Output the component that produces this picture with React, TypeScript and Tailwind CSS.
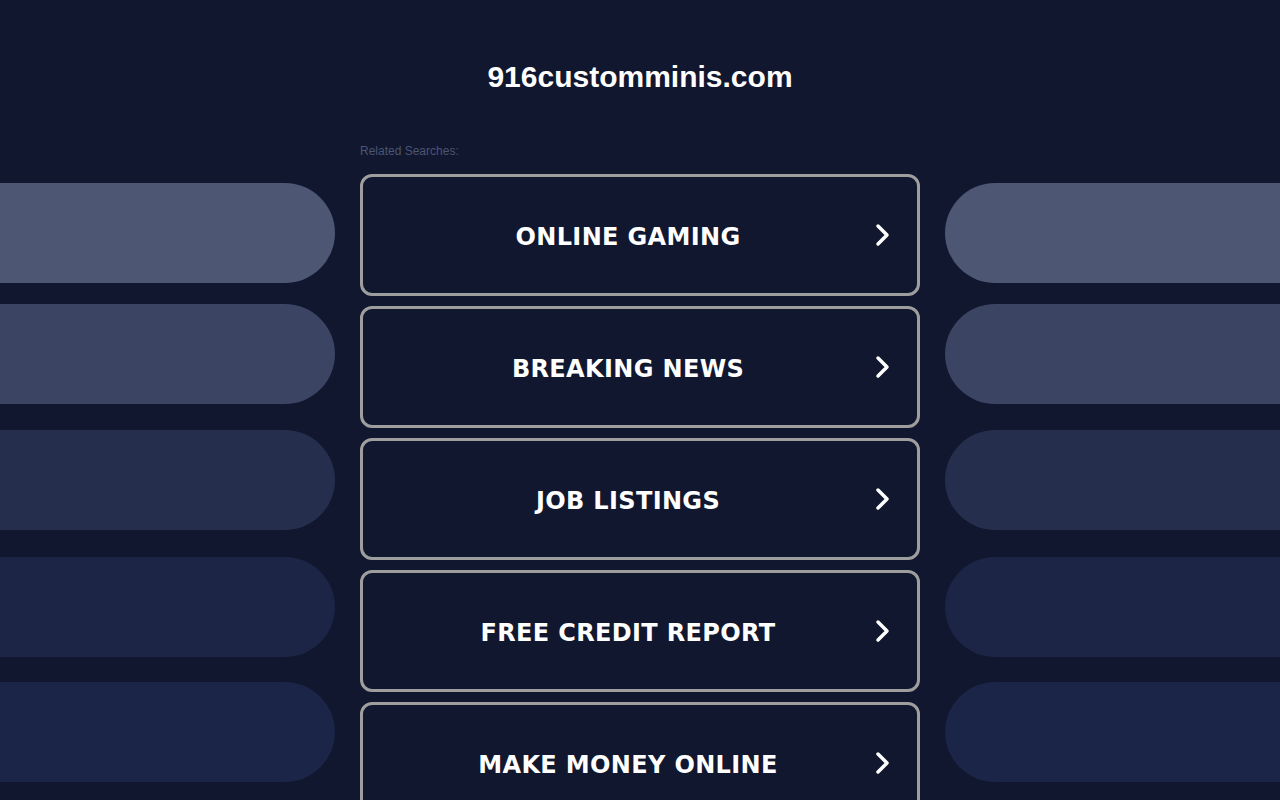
const searches = [
  'ONLINE GAMING',
  'BREAKING NEWS',
  'JOB LISTINGS',
  'FREE CREDIT REPORT',
  'MAKE MONEY ONLINE',
];

// side pills: colour + top margin (they don't line up with the buttons exactly)
const pills = [
  { bg: 'bg-[#4d5672]', mt: 'mt-0' },
  { bg: 'bg-[#3b4462]', mt: 'mt-[21px]' },
  { bg: 'bg-[#262e4d]', mt: 'mt-[26px]' },
  { bg: 'bg-[#1c2546]', mt: 'mt-[27px]' },
  { bg: 'bg-[#1b2548]', mt: 'mt-[25px]' },
];

function Chevron() {
  return (
    <svg
      className="w-[24px] h-[24px] shrink-0"
      viewBox="0 0 24 24"
      fill="none"
      stroke="white"
      strokeWidth={3.5}
      strokeLinecap="round"
      strokeLinejoin="round"
    >
      <path d="M7 3l9 9-9 9" />
    </svg>
  );
}

function Pills({ side }: { side: 'left' | 'right' }) {
  return (
    <div className="flex flex-col pt-[43px]">
      {pills.map((p, i) => (
        <div
          key={i}
          className={`${p.bg} ${p.mt} h-[100px] ${
            side === 'left' ? 'rounded-r-[50px]' : 'rounded-l-[50px]'
          }`}
        />
      ))}
    </div>
  );
}

export default function App() {
  return (
    <div className="h-[800px] w-full overflow-hidden bg-[#11172e] font-['Liberation_Sans',Arial,sans-serif]">
      <div className="pt-[60px] h-[140px] text-center text-white text-[30px] leading-[34px] font-bold">
        916customminis.com
      </div>

      <div className="grid grid-cols-[1fr_560px_1fr] gap-[25px]">
        <Pills side="left" />

        <div className="flex flex-col">
          <div className="pt-[1px] text-[12px] leading-[20px] text-[#4b5574]">Related Searches:</div>
          <div className="mt-[13px] flex flex-col gap-[10px]">
            {searches.map((s) => (
              <a
                key={s}
                href="#"
                className="h-[122px] shrink-0 flex items-center pl-[22px] border-[3px] border-[#9e9e9e] rounded-[12px] bg-[#11172e]"
              >
                <span className="flex-1 pt-[4px] text-center text-white text-[24px] font-bold tracking-[0.35px] font-['DejaVu_Sans',Verdana,sans-serif]">
                  {s}
                </span>
                <span className="w-[24px] mr-[22px] flex items-center">
                  <Chevron />
                </span>
              </a>
            ))}
          </div>
        </div>

        <Pills side="right" />
      </div>
    </div>
  );
}
